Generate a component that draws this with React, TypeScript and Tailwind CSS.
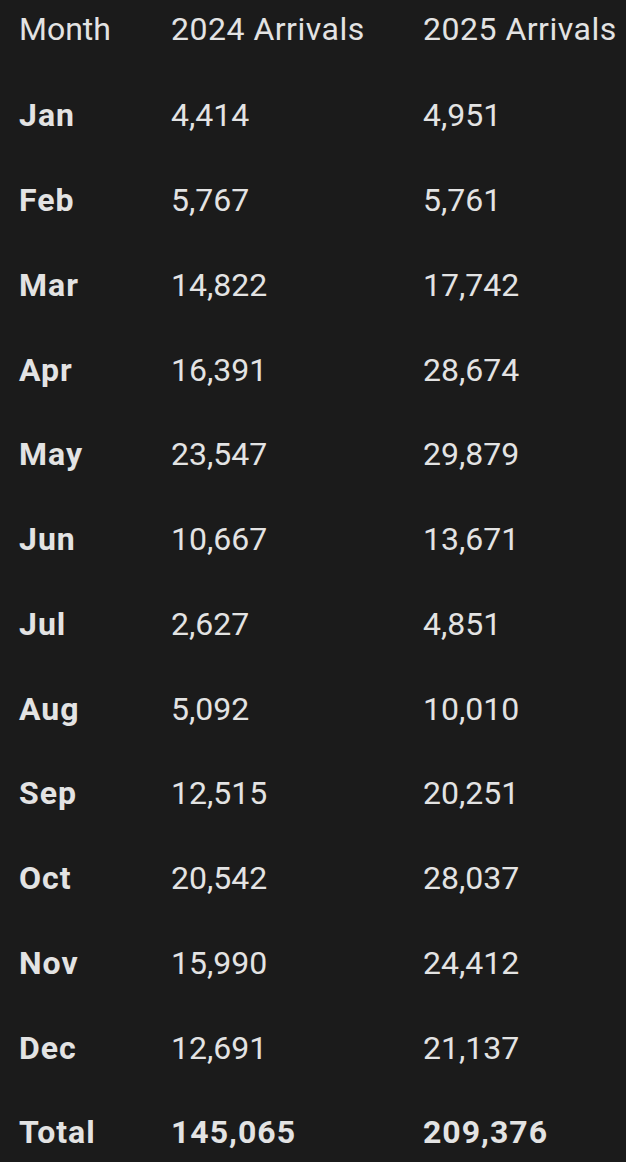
import React from "react";

const rows: [string, string, string][] = [
  ["Jan", "4,414", "4,951"],
  ["Feb", "5,767", "5,761"],
  ["Mar", "14,822", "17,742"],
  ["Apr", "16,391", "28,674"],
  ["May", "23,547", "29,879"],
  ["Jun", "10,667", "13,671"],
  ["Jul", "2,627", "4,851"],
  ["Aug", "5,092", "10,010"],
  ["Sep", "12,515", "20,251"],
  ["Oct", "20,542", "28,037"],
  ["Nov", "15,990", "24,412"],
  ["Dec", "12,691", "21,137"],
];

export default function App() {
  return (
    <div
      className="min-h-[1162px] w-full bg-[#1b1b1b] text-[#e3e3e3] text-[32px] overflow-hidden"
      style={{ fontFamily: "Roboto, 'Noto Sans', sans-serif" }}
    >
      <div className="grid grid-cols-[152px_252px_1fr] pl-[19px] h-[57px] items-center whitespace-nowrap tracking-[0.5px]">
        <div className="tracking-normal">Month</div>
        <div>2024 Arrivals</div>
        <div>2025 Arrivals</div>
      </div>
      <div className="h-[16px]" />
      {rows.map(([m, a, b]) => (
        <div
          key={m}
          className="grid grid-cols-[152px_252px_1fr] pl-[19px] h-[84.75px] items-center whitespace-nowrap"
        >
          <div className="font-bold tracking-[1px]">{m}</div>
          <div>{a}</div>
          <div>{b}</div>
        </div>
      ))}
      <div className="grid grid-cols-[152px_252px_1fr] pl-[19px] h-[84.75px] items-center whitespace-nowrap font-bold tracking-[1px]">
        <div>Total</div>
        <div>145,065</div>
        <div>209,376</div>
      </div>
    </div>
  );
}
